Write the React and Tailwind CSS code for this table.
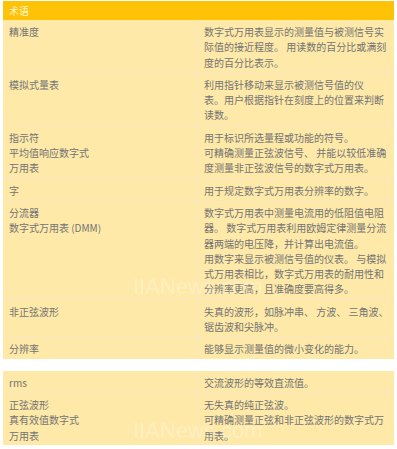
const rowsA = [
  {
    term: ["精准度"],
    desc: [
      "数字式万用表显示的测量值与被测信号实",
      "际值的接近程度。 用读数的百分比或满刻",
      "度的百分比表示。",
    ],
  },
  {
    term: ["模拟式量表"],
    desc: [
      "利用指针移动来显示被测信号值的仪",
      "表。用户根据指针在刻度上的位置来判断",
      "读数。",
    ],
  },
  {
    term: ["指示符", "平均值响应数字式", "万用表"],
    desc: [
      "用于标识所选量程或功能的符号。",
      "可精确测量正弦波信号、 并能以较低准确",
      "度测量非正弦波信号的数字式万用表。",
    ],
  },
  {
    term: ["字"],
    desc: ["用于规定数字式万用表分辨率的数字。"],
  },
  {
    term: ["分流器", "数字式万用表 (DMM)"],
    desc: [
      "数字式万用表中测量电流用的低阻值电阻",
      "器。 数字式万用表利用欧姆定律测量分流",
      "器两端的电压降，并计算出电流值。",
      "用数字来显示被测信号值的仪表。 与模拟",
      "式万用表相比，数字式万用表的耐用性和",
      "分辨率更高，且准确度要高得多。",
    ],
  },
  {
    term: ["非正弦波形"],
    desc: ["失真的波形，如脉冲串、 方波、 三角波、", "锯齿波和尖脉冲。"],
  },
  {
    term: ["分辨率"],
    desc: ["能够显示测量值的微小变化的能力。"],
  },
];

const rowsB = [
  {
    term: ["rms"],
    desc: ["交流波形的等效直流值。"],
  },
  {
    term: ["正弦波形", "真有效值数字式", "万用表"],
    desc: [
      "无失真的纯正弦波。",
      "可精确测量正弦和非正弦波形的数字式万",
      "用表。",
    ],
  },
];

function Row({ row, first }) {
  return (
    <div
      className={`grid grid-cols-[194px_1fr] ${first ? "" : "border-t border-[#f8e6c2]"}`}
    >
      <div className="pl-[6px] pt-[4px] pb-[2px] border-r border-[#f8e6c2]">
        {row.term.map((t, i) => (
          <div key={i} className="whitespace-nowrap h-[15.3px]">{t}</div>
        ))}
      </div>
      <div className="pl-[7px] pt-[4px] pb-[2px]">
        {row.desc.map((t, i) => (
          <div key={i} className="whitespace-nowrap h-[15.3px]">{t}</div>
        ))}
      </div>
    </div>
  );
}

export default function App() {
  return (
    <div
      className="relative w-[397px] h-[449px] bg-white pt-[1px] overflow-hidden text-[10px] leading-[15.3px] text-[#747474]"
      style={{ fontFamily: '"Noto Sans CJK SC", "Noto Sans", sans-serif' }}
    >
      <div className="ml-[3px] w-[391px] bg-[#fee9a8]">
        <div className="h-[19px] bg-[#fec307] pl-[6px] leading-[19px] text-[#fff4c8]">
          术语
        </div>
        {rowsA.map((row, i) => (
          <Row key={i} row={row} first={i === 0} />
        ))}
      </div>

      <div className="ml-[3px] mt-[12px] w-[391px] bg-[#fee9a8]">
        {rowsB.map((row, i) => (
          <Row key={i} row={row} first={i === 0} />
        ))}
      </div>

      <div
        className="absolute left-[133px] top-[276px] text-[22px] leading-none text-white/30 whitespace-nowrap"
        style={{ fontFamily: '"Liberation Sans", sans-serif' }}
      >
        IIANews.com
      </div>
      <div
        className="absolute left-[133px] top-[420px] text-[22px] leading-none text-white/30 whitespace-nowrap"
        style={{ fontFamily: '"Liberation Sans", sans-serif' }}
      >
        IIANews.com
      </div>
    </div>
  );
}
